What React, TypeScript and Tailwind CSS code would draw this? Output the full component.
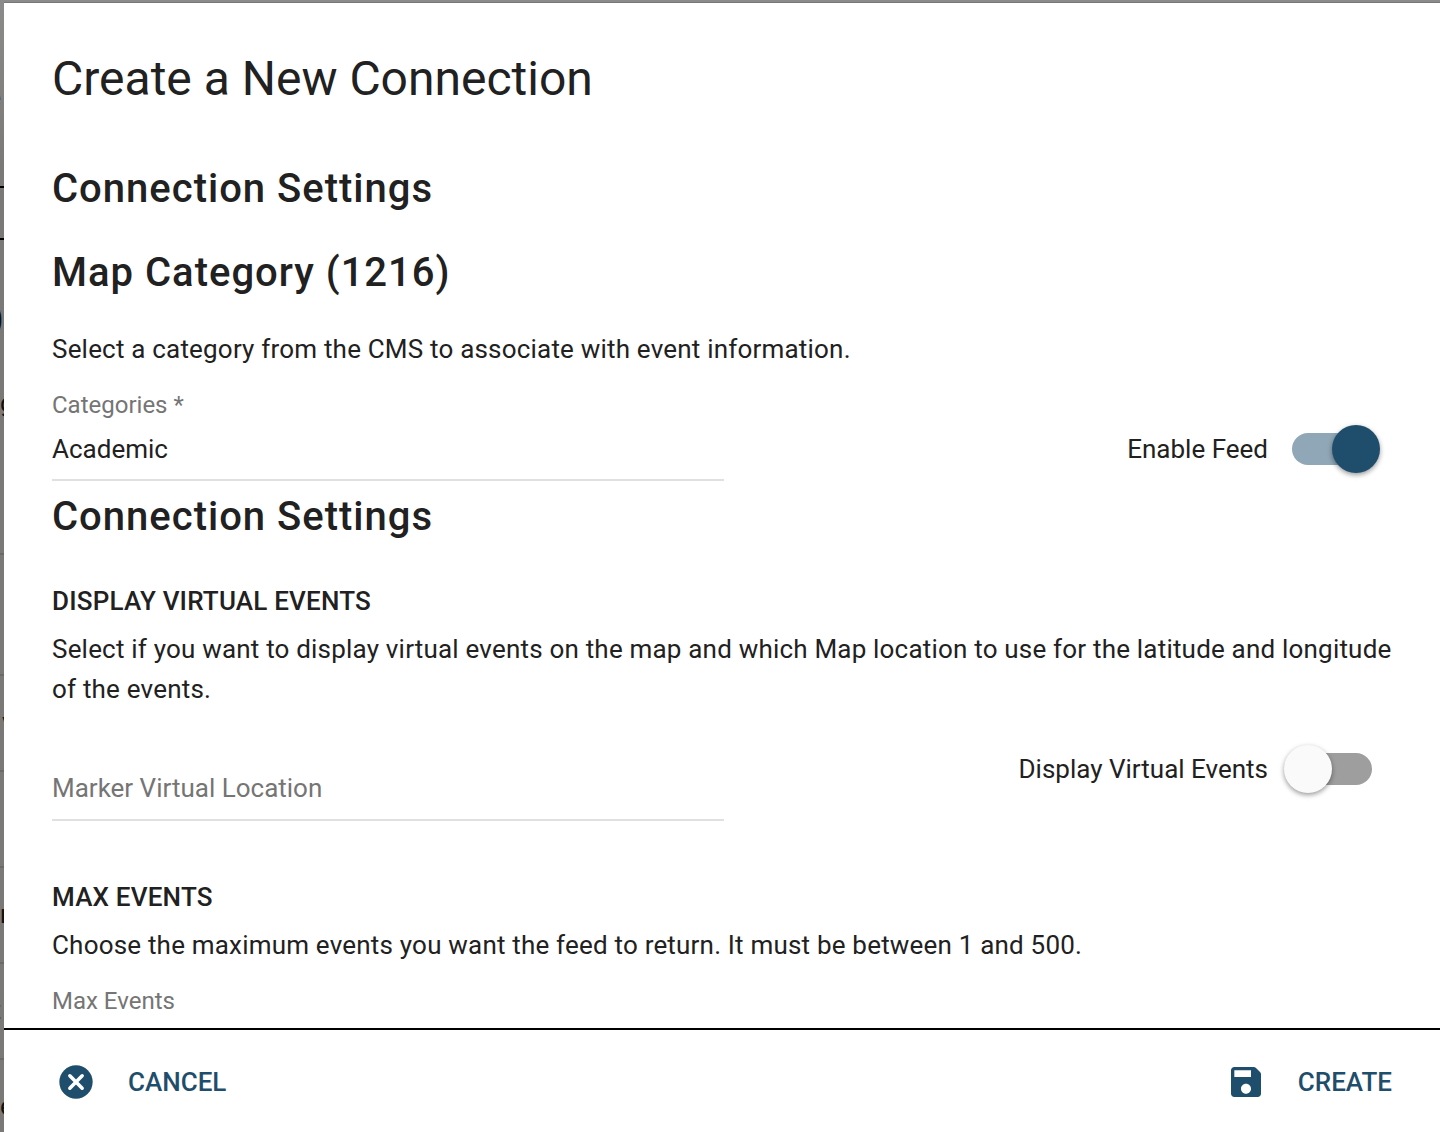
import { useState } from "react";

const Toggle = ({ id, label, checked, onChange }) => (
  <label htmlFor={id} className="mr-4 flex items-center gap-4 text-[26px] leading-10 cursor-pointer">
    {label}
    <span className="relative flex w-24 h-12 items-center pl-2">
      <input id={id} type="checkbox" role="switch" checked={checked} onChange={onChange} className="peer sr-only" />
      <span className="w-20 h-8 rounded-full bg-[#9e9e9e] peer-checked:bg-[#8fa7b6]" />
      <span className="absolute left-0 top-0 size-12 rounded-full bg-[#fafafa] shadow-[0_2px_5px_rgba(0,0,0,0.4)] peer-checked:left-12 peer-checked:bg-[#1f4e6c]" />
    </span>
  </label>
);

const SectionTitle = ({ children }) => (
  <h2 className="text-[40px] leading-14 font-medium tracking-wide">{children}</h2>
);

const SettingIntro = ({ title, children }) => (
  <div className="text-[26px] leading-10 tracking-[0.0075em]">
    <h3 className="font-medium uppercase">{title}</h3>
    <p className="mt-2">{children}</p>
  </div>
);

// page hidden behind the dialog, only its left edge is visible
const Backdrop = () => (
  <div
    aria-hidden="true"
    className="absolute inset-y-0 left-0 w-1 overflow-hidden bg-linear-to-b from-[#8b8b8b] to-[#7b7977] to-15% text-[26px] leading-10 text-[#111]"
  >
    <span className="absolute top-[77px] right-[3px]">e</span>
    <div className="absolute top-[186px] h-[2px] w-full bg-black" />
    <div className="absolute top-[238px] h-[2px] w-full bg-black" />
    <span className="absolute top-[301px] right-0 text-[48px]">O</span>
    <span className="absolute top-[383px] left-0">g</span>
    <div className="absolute top-[553px] h-[2px] w-full bg-[#6c6a68]" />
    <div className="absolute top-[674px] h-[2px] w-full bg-[#6c6a68]" />
    <span className="absolute top-[702px] left-[2px]">v</span>
    <div className="absolute top-[770px] h-[2px] w-full bg-[#6c6a68]" />
    <div className="absolute top-[866px] h-[2px] w-full bg-[#6c6a68]" />
    <span className="absolute top-[894px] left-0">r</span>
    <div className="absolute top-[962px] h-[2px] w-full bg-[#6c6a68]" />
    <span className="absolute top-[990px] right-[3px]">t</span>
    <div className="absolute top-[1058px] h-[2px] w-full bg-[#6c6a68]" />
    <span className="absolute top-[1086px] left-0">e</span>
  </div>
);

export default function App() {
  const [feed, setFeed] = useState(true);
  const [virtualEvents, setVirtualEvents] = useState(false);
  const [category, setCategory] = useState("Academic");
  const [location, setLocation] = useState("");
  const [maxEvents, setMaxEvents] = useState("");

  return (
    <div className="relative h-screen overflow-hidden bg-[#8b8b8b] pl-1 pt-[2px] font-[Roboto,sans-serif] text-[#212121]">
      <Backdrop />
      <form
        role="dialog"
        aria-labelledby="dialog-title"
        onSubmit={(e) => e.preventDefault()}
        className="flex flex-col h-full border-t border-[#777] bg-white"
      >
        <div className="flex-1 min-h-0 overflow-y-auto [scrollbar-width:none] pl-12 pr-11 pt-11">
          <h1 id="dialog-title" className="mb-[50px] text-[48px] leading-16">
            Create a New Connection
          </h1>

          <div className="flex flex-col gap-7">
            <SectionTitle>Connection Settings</SectionTitle>
            <SectionTitle>Map Category (1216)</SectionTitle>
            <p className="text-[26px] leading-10 tracking-[0.0075em]">
              Select a category from the CMS to associate with event information.
            </p>
          </div>

          <div className="mt-5 mb-2 flex items-end justify-between">
            <div className="flex w-1/2 flex-col">
              <label htmlFor="category" className="text-2xl leading-8 text-[#757575]">
                Categories *
              </label>
              <input
                id="category"
                value={category}
                onChange={(e) => setCategory(e.target.value)}
                className="h-[60px] border-b-2 border-[#e0e0e0] pb-[2px] text-[26px] outline-none"
              />
            </div>
            <div className="pb-2">
              <Toggle id="feed" label="Enable Feed" checked={feed} onChange={() => setFeed(!feed)} />
            </div>
          </div>

          <SectionTitle>Connection Settings</SectionTitle>

          <div className="mt-9">
            <SettingIntro title="Display Virtual Events">
              Select if you want to display virtual events on the map and which Map location to use for the latitude and
              longitude of the events.
            </SettingIntro>
          </div>

          <div className="mt-9 mb-14 flex items-start justify-between">
            <input
              aria-label="Marker Virtual Location"
              placeholder="Marker Virtual Location"
              value={location}
              onChange={(e) => setLocation(e.target.value)}
              className="mt-4 h-[60px] w-1/2 border-b-2 border-[#e0e0e0] pb-1 text-[26px] outline-none placeholder:text-[#757575]"
            />
            <Toggle
              id="virtual-events"
              label="Display Virtual Events"
              checked={virtualEvents}
              onChange={() => setVirtualEvents(!virtualEvents)}
            />
          </div>

          <SettingIntro title="Max Events">
            Choose the maximum events you want the feed to return. It must be between 1 and 500.
          </SettingIntro>
          <div className="mt-5 flex w-1/2 flex-col">
            <label htmlFor="max-events" className="text-2xl leading-8 text-[#757575]">
              Max Events
            </label>
            <input
              id="max-events"
              value={maxEvents}
              onChange={(e) => setMaxEvents(e.target.value)}
              className="h-[60px] border-b-2 border-[#e0e0e0] text-[26px] outline-none"
            />
          </div>
        </div>

        <footer className="flex justify-between border-t-2 border-black px-12 pt-7 pb-[26px] text-[26px] leading-10 font-medium text-[#1f4e6c]">
          <button type="button" className="flex items-center gap-7 cursor-pointer">
            <svg viewBox="0 0 24 24" className="size-12 p-1">
              <circle cx="12" cy="12" r="10" fill="currentColor" />
              <path d="M8.3 8.3l7.4 7.4M15.7 8.3l-7.4 7.4" stroke="white" strokeWidth="2.1" strokeLinecap="round" />
            </svg>
            CANCEL
          </button>
          <button type="submit" className="flex items-center gap-7 cursor-pointer">
            <svg viewBox="0 0 24 24" className="size-12 p-1" fill="currentColor">
              <path d="M16.6 3H5c-1.11 0-2 .9-2 2v14c0 1.1.89 2 2 2h14c1.1 0 2-.9 2-2V7.4c0-.5-.2-1-.6-1.4L18 3.6c-.4-.4-.9-.6-1.4-.6zM12 19c-1.66 0-3-1.34-3-3s1.34-3 3-3 3 1.34 3 3-1.34 3-3 3zm3-10H5V5h10v4z" />
            </svg>
            CREATE
          </button>
        </footer>
      </form>
    </div>
  );
}
